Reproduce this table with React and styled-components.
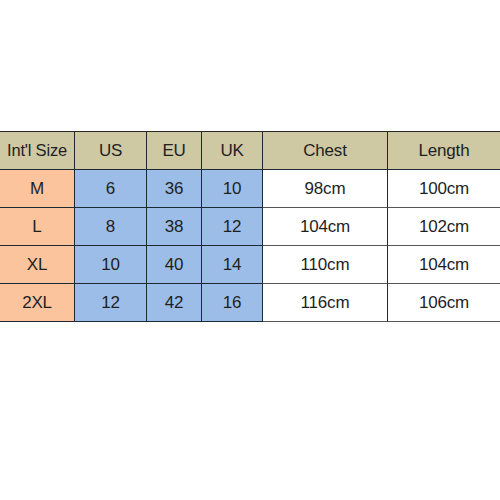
import React from 'react';
import styled, { createGlobalStyle } from 'styled-components';

const Global = createGlobalStyle`
  html, body {
    margin: 0;
    padding: 0;
    background: #fff;
  }
  body {
    font-family: "Liberation Sans", Arial, sans-serif;
  }
`;

const Page = styled.div`
  width: 500px;
  height: 500px;
  padding-top: 131px;
  box-sizing: border-box;
`;

const Grid = styled.div`
  display: grid;
  grid-template-columns: 75px 72px 55px 61px 125px 112px;
  grid-auto-rows: 38px;
  border-top: 1.5px solid #2a2a2a;
`;

const bgs = {
  head: '#cec8a3',
  size: '#fcc49d',
  num: '#9dbde9',
  plain: '#ffffff',
};

const Cell = styled.div`
  display: flex;
  align-items: center;
  justify-content: center;
  background: ${p => bgs[p.kind]};
  color: #1f1f1f;
  font-size: ${p => (p.kind === 'head' && p.first ? '16.5px' : '17px')};
  letter-spacing: -0.2px;
  border-bottom: 1px solid ${p => (p.kind === 'plain' ? '#555' : '#1e2a33')};
  border-right: ${p => (p.last ? 'none' : '1.5px solid #1e2a33')};
  box-sizing: border-box;
  white-space: nowrap;
`;

const header = ["Int'l Size", 'US', 'EU', 'UK', 'Chest', 'Length'];
const rows = [
  ['M', '6', '36', '10', '98cm', '100cm'],
  ['L', '8', '38', '12', '104cm', '102cm'],
  ['XL', '10', '40', '14', '110cm', '104cm'],
  ['2XL', '12', '42', '16', '116cm', '106cm'],
];

const kindFor = i => (i === 0 ? 'size' : i < 4 ? 'num' : 'plain');

const App = () => (
  <Page>
    <Global />
    <Grid>
      {header.map((h, i) => (
        <Cell key={h} kind="head" first={i === 0} last={i === 5}>{h}</Cell>
      ))}
      {rows.map(r =>
        r.map((v, i) => (
          <Cell key={r[0] + i} kind={kindFor(i)} last={i === 5}>{v}</Cell>
        ))
      )}
    </Grid>
  </Page>
);

export default App;
